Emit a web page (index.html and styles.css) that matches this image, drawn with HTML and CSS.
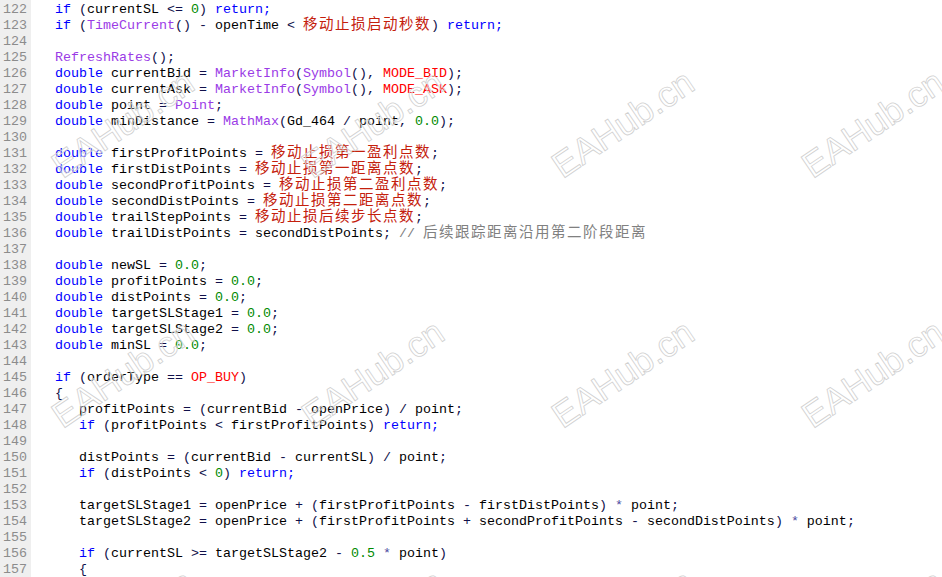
FILE: index.html
```html
<!DOCTYPE html>
<html lang="zh">
<head>
<meta charset="utf-8">
<title>EAHub code</title>
<link rel="stylesheet" href="styles.css">
</head>
<body>
<div class="editor">
  <div class="lines">
    <div class="row"><span class="num">122</span><span class="code">   <span class="k">if</span> <span class="p">(</span>currentSL <span class="p">&lt;=</span> <span class="n">0</span><span class="p">)</span> <span class="k">return;</span></span></div>
    <div class="row"><span class="num">123</span><span class="code">   <span class="k">if</span> <span class="p">(</span><span class="f">TimeCurrent</span><span class="p">()</span> <span class="p">-</span> openTime <span class="p">&lt;</span> <span class="z">移动止损启动秒数</span><span class="p">)</span> <span class="k">return;</span></span></div>
    <div class="row"><span class="num">124</span><span class="code"></span></div>
    <div class="row"><span class="num">125</span><span class="code">   <span class="f">RefreshRates</span><span class="p">();</span></span></div>
    <div class="row"><span class="num">126</span><span class="code">   <span class="k">double</span> currentBid <span class="p">=</span> <span class="f">MarketInfo</span><span class="p">(</span><span class="f">Symbol</span><span class="p">(),</span> <span class="c">MODE_BID</span><span class="p">);</span></span></div>
    <div class="row"><span class="num">127</span><span class="code">   <span class="k">double</span> currentAsk <span class="p">=</span> <span class="f">MarketInfo</span><span class="p">(</span><span class="f">Symbol</span><span class="p">(),</span> <span class="c">MODE_ASK</span><span class="p">);</span></span></div>
    <div class="row"><span class="num">128</span><span class="code">   <span class="k">double</span> point <span class="p">=</span> <span class="f">Point</span><span class="p">;</span></span></div>
    <div class="row"><span class="num">129</span><span class="code">   <span class="k">double</span> minDistance <span class="p">=</span> <span class="f">MathMax</span><span class="p">(</span>Gd_464 <span class="p">/</span> point<span class="p">,</span> <span class="n">0.0</span><span class="p">);</span></span></div>
    <div class="row"><span class="num">130</span><span class="code"></span></div>
    <div class="row"><span class="num">131</span><span class="code">   <span class="k">double</span> firstProfitPoints <span class="p">=</span> <span class="z">移动止损第一盈利点数</span><span class="p">;</span></span></div>
    <div class="row"><span class="num">132</span><span class="code">   <span class="k">double</span> firstDistPoints <span class="p">=</span> <span class="z">移动止损第一距离点数</span><span class="p">;</span></span></div>
    <div class="row"><span class="num">133</span><span class="code">   <span class="k">double</span> secondProfitPoints <span class="p">=</span> <span class="z">移动止损第二盈利点数</span><span class="p">;</span></span></div>
    <div class="row"><span class="num">134</span><span class="code">   <span class="k">double</span> secondDistPoints <span class="p">=</span> <span class="z">移动止损第二距离点数</span><span class="p">;</span></span></div>
    <div class="row"><span class="num">135</span><span class="code">   <span class="k">double</span> trailStepPoints <span class="p">=</span> <span class="z">移动止损后续步长点数</span><span class="p">;</span></span></div>
    <div class="row"><span class="num">136</span><span class="code">   <span class="k">double</span> trailDistPoints <span class="p">=</span> secondDistPoints<span class="p">;</span> <span class="m">// <span class="zc">后续跟踪距离沿用第二阶段距离</span></span></span></div>
    <div class="row"><span class="num">137</span><span class="code"></span></div>
    <div class="row"><span class="num">138</span><span class="code">   <span class="k">double</span> newSL <span class="p">=</span> <span class="n">0.0</span><span class="p">;</span></span></div>
    <div class="row"><span class="num">139</span><span class="code">   <span class="k">double</span> profitPoints <span class="p">=</span> <span class="n">0.0</span><span class="p">;</span></span></div>
    <div class="row"><span class="num">140</span><span class="code">   <span class="k">double</span> distPoints <span class="p">=</span> <span class="n">0.0</span><span class="p">;</span></span></div>
    <div class="row"><span class="num">141</span><span class="code">   <span class="k">double</span> targetSLStage1 <span class="p">=</span> <span class="n">0.0</span><span class="p">;</span></span></div>
    <div class="row"><span class="num">142</span><span class="code">   <span class="k">double</span> targetSLStage2 <span class="p">=</span> <span class="n">0.0</span><span class="p">;</span></span></div>
    <div class="row"><span class="num">143</span><span class="code">   <span class="k">double</span> minSL <span class="p">=</span> <span class="n">0.0</span><span class="p">;</span></span></div>
    <div class="row"><span class="num">144</span><span class="code"></span></div>
    <div class="row"><span class="num">145</span><span class="code">   <span class="k">if</span> <span class="p">(</span>orderType <span class="p">==</span> <span class="c">OP_BUY</span><span class="p">)</span></span></div>
    <div class="row"><span class="num">146</span><span class="code">   <span class="p">{</span></span></div>
    <div class="row"><span class="num">147</span><span class="code">      profitPoints <span class="p">=</span> <span class="p">(</span>currentBid <span class="p">-</span> openPrice<span class="p">)</span> <span class="p">/</span> point<span class="p">;</span></span></div>
    <div class="row"><span class="num">148</span><span class="code">      <span class="k">if</span> <span class="p">(</span>profitPoints <span class="p">&lt;</span> firstProfitPoints<span class="p">)</span> <span class="k">return;</span></span></div>
    <div class="row"><span class="num">149</span><span class="code"></span></div>
    <div class="row"><span class="num">150</span><span class="code">      distPoints <span class="p">=</span> <span class="p">(</span>currentBid <span class="p">-</span> currentSL<span class="p">)</span> <span class="p">/</span> point<span class="p">;</span></span></div>
    <div class="row"><span class="num">151</span><span class="code">      <span class="k">if</span> <span class="p">(</span>distPoints <span class="p">&lt;</span> <span class="n">0</span><span class="p">)</span> <span class="k">return;</span></span></div>
    <div class="row"><span class="num">152</span><span class="code"></span></div>
    <div class="row"><span class="num">153</span><span class="code">      targetSLStage1 <span class="p">=</span> openPrice <span class="p">+</span> <span class="p">(</span>firstProfitPoints <span class="p">-</span> firstDistPoints<span class="p">)</span> <span class="o">*</span> point<span class="p">;</span></span></div>
    <div class="row"><span class="num">154</span><span class="code">      targetSLStage2 <span class="p">=</span> openPrice <span class="p">+</span> <span class="p">(</span>firstProfitPoints <span class="p">+</span> secondProfitPoints <span class="p">-</span> secondDistPoints<span class="p">)</span> <span class="o">*</span> point<span class="p">;</span></span></div>
    <div class="row"><span class="num">155</span><span class="code"></span></div>
    <div class="row"><span class="num">156</span><span class="code">      <span class="k">if</span> <span class="p">(</span>currentSL <span class="p">&gt;=</span> targetSLStage2 <span class="p">-</span> <span class="n">0.5</span> <span class="o">*</span> point<span class="p">)</span></span></div>
    <div class="row"><span class="num">157</span><span class="code">      <span class="p">{</span></span></div>
  </div>
  <div class="marks" aria-hidden="true">
    <div class="wm"><span>EAHub.cn</span></div>
    <div class="wm"><span>EAHub.cn</span></div>
    <div class="wm"><span>EAHub.cn</span></div>
    <div class="wm"><span>EAHub.cn</span></div>
    <div class="wm"><span>EAHub.cn</span></div>
    <div class="wm"><span>EAHub.cn</span></div>
    <div class="wm"><span>EAHub.cn</span></div>
    <div class="wm"><span>EAHub.cn</span></div>
    <div class="wm"><span>EAHub.cn</span></div>
    <div class="wm"><span>EAHub.cn</span></div>
    <div class="wm"><span>EAHub.cn</span></div>
    <div class="wm"><span>EAHub.cn</span></div>
  </div>
</div>
</body>
</html>
```
FILE: styles.css
```css
html, body {
  margin: 0;
  padding: 0;
  background: #ffffff;
}
body {
  width: 942px;
  height: 577px;
  overflow: hidden;
}
.editor {
  position: relative;
  width: 942px;
  height: 577px;
  overflow: hidden;
  background: linear-gradient(to right, #efefef 0, #efefef 31px, #ffffff 31px);
}
.lines {
  padding-top: 2px;
  font-family: "Liberation Mono", "Courier New", monospace;
  font-size: 13.333px;
  color: #000000;
}
.row {
  display: grid;
  grid-template-columns: 31px 1fr;
  height: 16px;
  line-height: 16px;
  white-space: pre;
}
.num {
  padding-left: 3px;
  color: #8c8c8c;
}
.code {
  color: #000000;
}
.k { color: #0000ff; }
.f { color: #9a3be6; }
.c { color: #ff0000; }
.n { color: #008a00; }
.p { color: #10104a; }
.o { color: #4a4aa0; }
.m { color: #808080; }
.z, .zc {
  font-family: "Noto Sans CJK SC", "Noto Sans", sans-serif;
  font-size: 14.5px;
  letter-spacing: 1.5px;
  line-height: 0;
}
.z { color: #c4200c; }
.zc { color: #808080; }
.marks {
  position: absolute;
  left: -2px;
  top: -1px;
  display: grid;
  grid-template-columns: repeat(4, 250px);
  grid-auto-rows: 250px;
  pointer-events: none;
}
.wm {
  display: flex;
  align-items: center;
  justify-content: center;
}
.wm span {
  display: block;
  font-family: "Liberation Sans", Arial, sans-serif;
  font-size: 36px;
  line-height: 1;
  color: rgba(255, 255, 255, 0.3);
  -webkit-text-stroke: 0.8px #d0d0d0;
  transform: rotate(-34deg);
  white-space: nowrap;
}
```
